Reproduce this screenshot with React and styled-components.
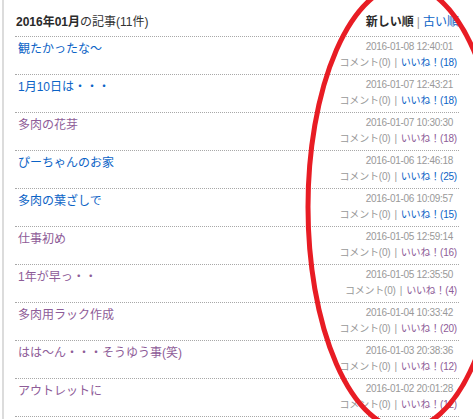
import React from 'react'
import styled, { createGlobalStyle } from 'styled-components'

const GlobalStyle = createGlobalStyle`
  html, body { margin: 0; padding: 0; background: #fff; }
  body { font-family: "Liberation Sans", "Noto Sans CJK JP", sans-serif; }
`

const BLUE = '#0b63c6'
const VISITED = '#8e5c98'

const posts = [
  { title: '観たかったな～', date: '2016-01-08 12:40:01', likes: 18, visited: false },
  { title: '1月10日は・・・', date: '2016-01-07 12:43:21', likes: 18, visited: false },
  { title: '多肉の花芽', date: '2016-01-07 10:30:30', likes: 18, visited: true },
  { title: 'ぴーちゃんのお家', date: '2016-01-06 12:46:18', likes: 25, visited: false },
  { title: '多肉の葉ざしで', date: '2016-01-06 10:09:57', likes: 15, visited: false },
  { title: '仕事初め', date: '2016-01-05 12:59:14', likes: 16, visited: true },
  { title: '1年が早っ・・', date: '2016-01-05 12:35:50', likes: 4, visited: true },
  { title: '多肉用ラック作成', date: '2016-01-04 10:33:42', likes: 20, visited: true },
  { title: 'はは～ん・・・そうゆう事(笑)', date: '2016-01-03 20:38:36', likes: 12, visited: true },
  { title: 'アウトレットに', date: '2016-01-02 20:01:28', likes: 12, visited: true },
]

function App() {
  return (
    <>
      <GlobalStyle />
      <Page>
        <Panel>
          <Header>
            <HeadTitle>
              <strong>2016年01月</strong>の記事(11件)
            </HeadTitle>
            <Sort>
              <strong>新しい順</strong>
              <Bar>|</Bar>
              <SortLink>古い順</SortLink>
            </Sort>
          </Header>
          <List>
            {posts.map(p => (
              <Row key={p.date}>
                <Title visited={p.visited}>{p.title}</Title>
                <Meta>
                  <Date>{p.date}</Date>
                  <Counts>
                    コメント(0)<Bar small>|</Bar>
                    <Likes visited={p.visited}>いいね！({p.likes})</Likes>
                  </Counts>
                </Meta>
              </Row>
            ))}
          </List>
        </Panel>
        <Mark viewBox="0 0 473 419" width="473" height="419">
          <ellipse cx="405" cy="207" rx="97" ry="222" fill="none" stroke="#e81c24" strokeWidth="5" />
        </Mark>
      </Page>
    </>
  )
}

export default App

const Page = styled.div`
  position: relative;
  width: 473px;
  height: 419px;
  overflow: hidden;
`

const Panel = styled.div`
  margin-left: 2px;
  border-left: 2px solid #dcdcdc;
  padding: 0 14px 0 11px;
  height: 100%;
`

const Header = styled.div`
  display: flex;
  justify-content: space-between;
  align-items: center;
  padding: 12px 0 4px;
  line-height: 20px;
  font-size: 12px;
  color: #333;
  border-bottom: 1px dotted #a8a8a8;
`

const HeadTitle = styled.div`
  padding-left: 1px;
  strong { font-weight: bold; color: #2a2a2a; }
`

const Sort = styled.div`
  display: flex;
  align-items: center;
  strong { font-weight: bold; color: #2a2a2a; }
`

const Bar = styled.span`
  color: #999;
  margin: 0 ${props => (props.small ? '4px' : '3px')};
`

const SortLink = styled.span`
  color: ${BLUE};
`

const List = styled.div``

const Row = styled.div`
  display: flex;
  justify-content: space-between;
  padding: 3px 0 2px;
  border-bottom: 1px dotted #a8a8a8;
`

const Title = styled.div`
  padding-left: 3px;
  font-size: 12px;
  line-height: 18px;
  color: ${props => (props.visited ? VISITED : BLUE)};
`

const Meta = styled.div`
  display: flex;
  flex-direction: column;
  align-items: flex-end;
  font-size: 10px;
  color: #999;
`

const Date = styled.div`
  line-height: 14px;
  padding-right: 6px;
  font-size: 10px;
  letter-spacing: -0.3px;
`

const Counts = styled.div`
  line-height: 18px;
  padding-right: 2px;
  letter-spacing: -0.2px;
`

const Likes = styled.span`
  color: ${props => (props.visited ? VISITED : BLUE)};
`

const Mark = styled.svg`
  position: absolute;
  left: 0;
  top: 0;
  pointer-events: none;
`
